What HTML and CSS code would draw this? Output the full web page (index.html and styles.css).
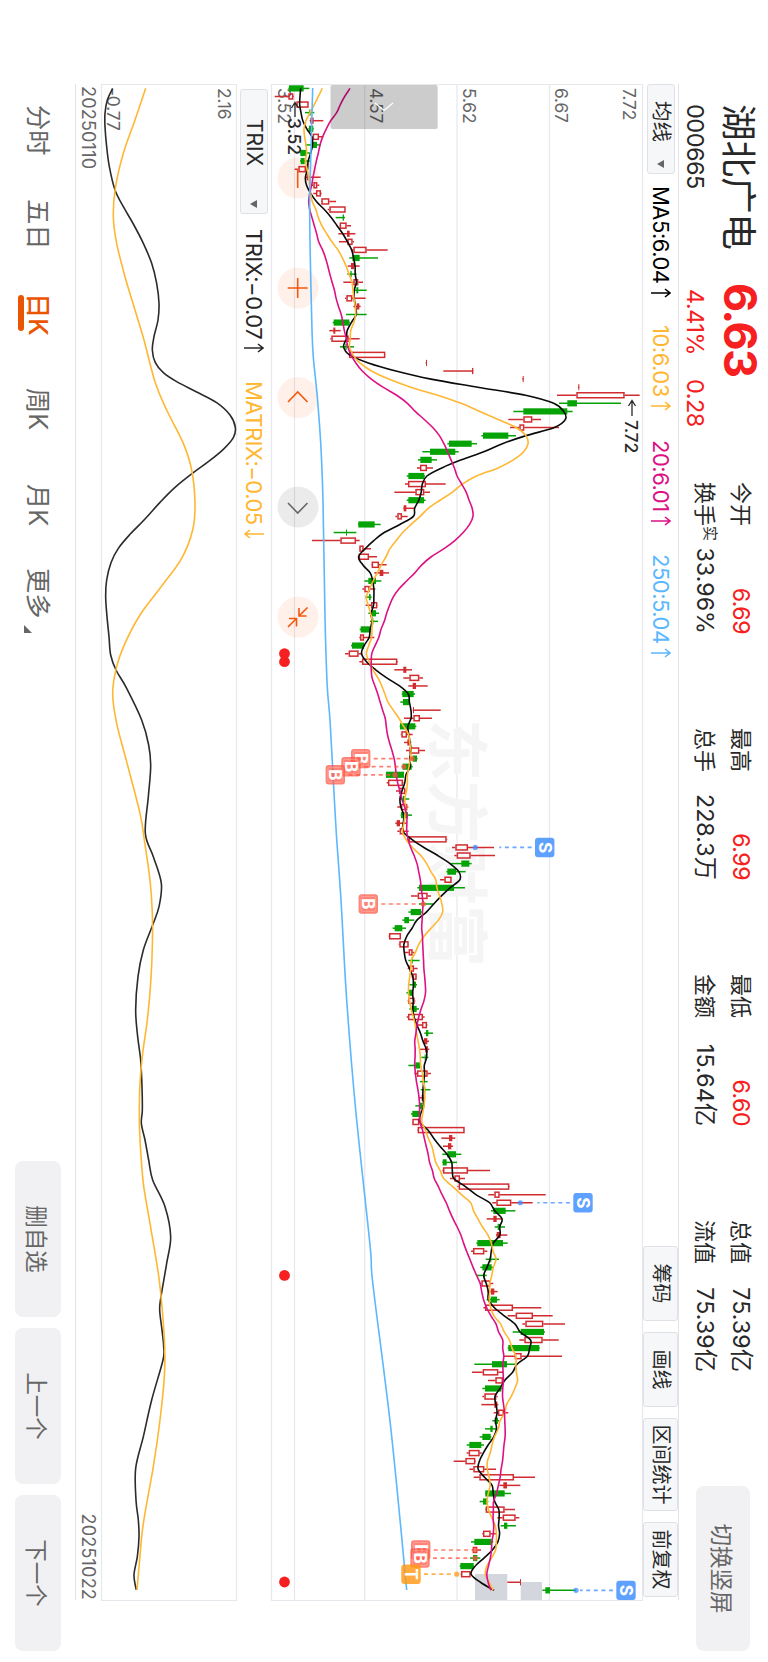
FILE: index.html
```html
<!DOCTYPE html>
<html lang="zh-CN">
<head>
<meta charset="utf-8">
<title>湖北广电 000665</title>
<link rel="stylesheet" href="styles.css">
</head>
<body>
<div class="screen">
<div class="stage">
  <header class="header">
    <div class="quote">
      <div class="quote-top"><span class="name">湖北广电</span><span class="price">6.63</span></div>
      <div class="quote-sub"><span class="code">000665</span><span class="pct">4.41%</span><span class="chg">0.28</span></div>
    </div>
    <div class="stats">
      <div class="stat"><span>今开</span><b class="red">6.69</b><span>换手<sup>实</sup></span><b>33.96%</b></div>
      <div class="stat"><span>最高</span><b class="red">6.99</b><span>总手</span><b>228.3万</b></div>
      <div class="stat"><span>最低</span><b class="red">6.60</b><span>金额</span><b>15.64亿</b></div>
      <div class="stat"><span>总值</span><b>75.39亿</b><span>流值</span><b>75.39亿</b></div>
    </div>
    <button class="btn btn-switch">切换竖屏</button>
  </header>

  <div class="bar bar-ma">
    <div class="select select-ma"><span>均线</span><i class="caret"></i></div>
    <span class="ind ind-ma5">MA5:6.04<svg class="arrow" viewBox="0 0 12 20"><path d="M6 20V1M2 6L6 1L10 6"/></svg></span>
    <span class="ind ind-ma10">10:6.03<svg class="arrow" viewBox="0 0 12 20"><path d="M6 20V1M2 6L6 1L10 6"/></svg></span>
    <span class="ind ind-ma20">20:6.01<svg class="arrow" viewBox="0 0 12 20"><path d="M6 20V1M2 6L6 1L10 6"/></svg></span>
    <span class="ind ind-ma250">250:5.04<svg class="arrow" viewBox="0 0 12 20"><path d="M6 20V1M2 6L6 1L10 6"/></svg></span>
    <div class="tools"><span class="tool">筹码</span><span class="tool">画线</span><span class="tool tool-wide">区间统计</span><span class="tool">前复权</span></div>
  </div>

  <svg class="chart chart-main" id="main" viewBox="84 125 1518 372"></svg>

  <div class="bar bar-trix">
    <div class="select select-trix"><span>TRIX</span><i class="caret"></i></div>
    <span class="ind ind-trix">TRIX:−0.07<svg class="arrow" viewBox="0 0 12 20"><path d="M6 20V1M2 6L6 1L10 6"/></svg></span>
    <span class="ind ind-matrix">MATRIX:−0.05<svg class="arrow" viewBox="0 0 12 20"><path d="M6 0V19M2 14L6 19L10 14"/></svg></span>
  </div>

  <svg class="chart chart-trix" id="trix" viewBox="84 531 1518 136"></svg>

  <div class="dates"><span>20250110</span><span>20251022</span></div>

  <footer class="footer">
    <nav class="tabs">
      <span class="tab t1">分时</span><span class="tab t2">五日</span><span class="tab t3 active">日K</span><span class="tab t4">周K</span><span class="tab t5">月K</span><span class="tab t6">更多<i class="corner"></i></span>
    </nav>
    <div class="actions"><button class="btn">删自选</button><button class="btn">上一个</button><button class="btn">下一个</button></div>
  </footer>
</div>
</div>
<script src="chart.js"></script>
</body>
</html>
```
FILE: styles.css
```css
* { box-sizing: border-box; }
body { margin: 0; background: #fff; }
.screen { width: 768px; height: 1662px; overflow: hidden; }
.stage {
  width: 1662px; height: 768px; display: flex; flex-direction: column;
  transform-origin: 0 0; transform: translateX(768px) rotate(90deg);
  font-family: Inter, "Noto Sans CJK SC", sans-serif; color: #282828; white-space: nowrap;
}
.header { height: 89px; flex: none; display: flex; padding-left: 104px; position: relative; }
.header::after, .dates::after {
  content: ""; position: absolute; left: 84px; width: 1516px; bottom: -1px; height: 1px; background: #e4e4e8;
}
.quote { width: 378px; flex: none; }
.quote-top { height: 59px; display: flex; align-items: center; padding-bottom: 5px; }
.name { width: 179px; font-size: 36.5px; font-weight: 400; }
.price { font-size: 45px; font-weight: 700; color: #f62020; letter-spacing: -1.6px; }
.quote-sub { display: flex; font-size: 23.5px; line-height: 27px; letter-spacing: -0.5px; }
.code { width: 185px; }
.pct { width: 90px; color: #f62020; }
.chg { color: #f62020; }
.stats { display: flex; flex: none; width: 890px; gap: 94px; padding-top: 9px; }
.stat {
  display: grid; grid-template-columns: auto auto; justify-content: space-between;
  grid-auto-rows: 36px; line-height: 36px; width: 152px; font-size: 22px;
}
.stat b { font-weight: 400; text-align: right; letter-spacing: 0; font-size: 23.3px; }
.stat sup { font-size: 15px; line-height: 0; vertical-align: 8px; }
.stat .red { color: #f62020; letter-spacing: -0.6px; }
.btn {
  flex: none; border: 0; border-radius: 8px; background: #f1f1f3; color: #666; padding: 0;
  font: 22.5px Inter, "Noto Sans CJK SC", sans-serif; width: 156px; height: 46px;
}
.btn-switch { width: 165px; height: 54px; margin: 18px 0 0 114px; }

.bar { flex: none; display: flex; align-items: center; position: relative; }
.bar-ma { height: 36px; padding-left: 84px; }
.bar-trix { height: 34px; padding-left: 89px; }
.select {
  display: flex; align-items: center; justify-content: space-between; height: 28px;
  background: #f6f7f9; border: 1px solid #dfe1e6; border-radius: 3px; font-size: 20.5px; line-height: 26px;
}
.select-ma { width: 90px; padding: 0 5px 0 16px; }
.select-trix { width: 125px; padding: 0 5px 0 29px; font-size: 21px; }
.caret { border: 4.5px solid transparent; border-top: 7px solid #666; border-bottom: 0; }
.ind { display: flex; align-items: center; font-size: 22px; letter-spacing: -0.5px; }
.arrow { width: 12px; height: 20px; margin-left: 3px; fill: none; stroke: currentColor; stroke-width: 1.6; }
.ind-ma5 { width: 139px; margin-left: 12px; color: #000; }
.ind-ma10 { width: 115px; color: #ffb733; }
.ind-ma20 { width: 114px; color: #dc1186; }
.ind-ma250 { color: #5bb8ff; }
.ind-trix { width: 152px; margin-left: 15px; }
.ind-matrix { color: #ffb733; }
.tools { display: flex; gap: 11px; margin-left: auto; margin-right: 65px; }
.tool {
  width: 75px; height: 35px; text-align: center; font-size: 20px; line-height: 33px;
  background: #f6f7f9; border: 1px solid #dfe1e6; border-radius: 3px;
}
.tool-wide { width: 93px; }

.chart { flex: none; display: block; width: 1518px; margin-left: 84px; overflow: visible; }
.chart-main { height: 372px; }
.chart-trix { height: 136px; }
.grid { stroke: #e6e8ee; stroke-width: 1.2; fill: none; }
.axis { font-size: 17.5px; fill: #666; letter-spacing: -0.2px; }
.peak { font-size: 17.5px; fill: #282828; letter-spacing: -0.1px; font-weight: 500; }
.mark-arrow { fill: none; stroke: #282828; stroke-width: 1.3; }
.mark { font-size: 62px; font-weight: 700; fill: #f5f5f6; }
.up { stroke: #d12d30; fill: none; stroke-width: 1.5; }
.up-fill { fill: #d12d30; }
.down { stroke: #06a306; fill: none; stroke-width: 1.5; }
.down-fill { fill: #06a306; }
.line { fill: none; stroke-width: 1.6; stroke-linejoin: round; }
.black { stroke: #0a0a0a; }
.dark { stroke: #2b2b2b; }
.amber { stroke: #ffb733; }
.pink { stroke: #dc1186; }
.sky { stroke: #5bb8ff; }
.glyph { fill: none; stroke: #f4580d; stroke-width: 1.6; }
.glyph-off { stroke: #666; }
.badge text { font-size: 17px; font-weight: 700; fill: #fff; text-anchor: middle; }

.dates {
  flex: none; height: 25px; padding: 0 62px 0 86px; display: flex; justify-content: space-between;
  align-items: center; font-size: 18px; color: #666; letter-spacing: 0.2px; position: relative;
}
.footer { flex: none; height: 76px; display: flex; justify-content: space-between; padding: 15px 11px 0 105px; }
.tabs { display: flex; font-size: 25.3px; line-height: 46px; color: #666; }
.tab { position: relative; }
.t1, .t2 { width: 94px; }
.t3 { width: 95px; }
.t4 { width: 96px; }
.t5 { width: 84px; }
.active { color: #ea5504; font-weight: 500; }
.active::after {
  content: ""; position: absolute; left: 2px; top: 37px; width: 36px; height: 6px; border-radius: 3px; background: #ea5504;
}
.corner { position: absolute; left: 57px; top: 29px; border-left: 8px solid transparent; border-bottom: 8px solid #666; }
.actions { display: flex; gap: 11px; }
```
FILE: chart.js
```js
const NS = 'http://www.w3.org/2000/svg';
const BASE = 768;
const STEP = 8.075;
const FIRST = 88.4;
const main = document.getElementById('main');
const trix = document.getElementById('trix');

function add(parent, tag, attrs, text) {
  const el = document.createElementNS(NS, tag);
  for (const k in attrs) el.setAttribute(k, attrs[k]);
  if (text) el.textContent = text;
  parent.appendChild(el);
  return el;
}
const slot = i => FIRST + i * STEP;
const level = v => BASE - v;

// Each block: height offset, then "low bodyLow bodyHigh high" in thirds of a pixel.
// A leading minus marks a falling day.
const blocks = [
  [0, `-865 867 911 928;824 865 880 882;888 889 926 926;-915 928 932 943;929 931 941 970;-925 927 940 941;935 938 957 970;-915 935 951 963;-900 901 921 933;-900 902 914 931;884 895 918 920;918 920 925 962;935 940 952 958;940 948 963 965;963 964 988 1008;983 988 1037 1037;-1007 1028 1032 1035;1018 1019 1040 1053;1015 1041 1049 1066;1017 1042 1058 1062;1055 1060 1100 1163;-1048 1057 1079 1134;1043 1053 1062 1079;-1042 1051 1055 1070;1030 1060 1075 1089;-1063 1069 1075 1100;1035 1039 1057 1097;1060 1070 1078 1082;-1038 1065 1068 1100;-998 1001 1048 1050;988 1000 1006 1022;991 994 1046 1079;-1020 1036 1040 1062`],
  [230, `356 357 466 466;587 588 591 591;640 726 730 730;877 878 881 881;1044 1045 1048 1048;981 1039 1184 1229;-987 1012 1041 1173;-850 880 1012 1028;835 880 907 933;840 868 883 987;-754 759 835 858;-652 657 725 741;-577 600 676 686;-564 571 605 621;561 570 591 609;-530 535 583 585;525 534 588 647;493 556 583 600;-530 535 582 587;520 521 529 553;496 502 516 533;-384 385 434 452;-311 348 351 379;246 331 378 389;387 388 401 423;385 386 417 441;424 425 447 470;433 449 460 477;-403 415 438 454;397 403 419 436;-406 417 422 425;407 423 442 443;-415 424 438 447;-420 427 430 444;-389 392 422 425;388 390 402 433;-363 366 402 405;345 356 386 397;388 396 502 504;493 520 529 546;520 538 568 579;535 548 558 593;-515 517 551 555;-511 519 537 540;548 549 552 632;522 550 570 606`],
  [270, `-389 390 436 439;392 394 411 428;402 412 418 424;408 418 448 465;-417 428 441 443;-395 398 425 428;-347 348 402 402;350 354 399 400;378 387 406 408;-390 398 404 418;382 393 412 415;-392 393 414 426;376 380 390 408;382 389 401 416;412 416 530 532;546 556 594 672;553 560 602 675;-541 574 598 605;-529 532 558 587;510 523 545 545;-442 447 552 585;423 443 473 483;-447 459 462 490;-415 422 453 458;-397 403 417 433;-368 374 397 408;356 357 393 393;386 388 416 417;405 416 428 433;-415 425 428 449;413 418 432 443;425 428 440 441;-418 428 438 441;-409 415 428 430;413 415 434 436;-418 425 440 447;410 414 459 464;440 456 471 472;-463 468 475 489;459 462 472 477;450 466 474 478;-454 464 467 475;-415 436 450 452;433 441 473 483;-450 459 462 473;-452 463 466 481;446 455 461 466;-436 449 458 460`],
  [370, `-123 127 148 150;126 127 148 150;142 143 284 284;214 237 247 256;219 234 244 249;-217 232 258 274;-217 218 230 261;217 219 294 360;240 253 270 285;262 266 418 419;355 373 389 527;367 379 424 488;-363 370 407 436;350 370 380 395;-374 383 391 405;378 380 392 412;-319 322 399 413;303 309 343 352;-347 361 364 387;-331 337 365 372;-320 342 345 350;330 334 361 370;352 363 373 383;-350 362 381 389;340 345 429 514;413 437 489 548;457 466 520 585;-428 452 522 525;448 463 518 566;-413 415 508 509;402 434 455 576;-313 366 411 435;306 338 385 400;354 376 399 400;-337 345 394 396;337 343 379 383;334 373 382 385;371 384 402 415;-367 374 384 388;-345 361 368 380;-329 337 362 364;-290 298 334 342;290 296 329 335;251 286 316 318;298 310 343 378;311 328 432 495;388 400 411 451;-345 346 404 423;-329 339 351 355;345 347 404 435;382 398 437 448;-392 402 412 438;337 339 362 378;-303 313 365 370;305 308 322 333;-300 309 322 331;-269 271 311 312;272 273 302 305;412 450 453 453;-517 526 540 618`]
];
const candles = [];
blocks.forEach(([off, rows]) => rows.split(';').forEach(r => {
  const n = r.split(' ').map(Number);
  const down = n[0] < 0;
  const [lo, a, b, hi] = n.map(v => off + Math.abs(v) / 3);
  candles.push({ down, lo, a, b, hi, close: down ? a : b });
}));

// Frame and price levels
[218.5, 311, 403.3, 473.5].forEach(y => add(main, 'path', { class: 'grid', d: `M84 ${y}H1600` }));
add(main, 'path', { class: 'grid', d: 'M84.5 125.5H1600.5V496.5H84.5Z' });
[['东', 719], ['方', 781], ['财', 843], ['富', 905]].forEach(([c, x]) => add(main, 'text', { class: 'mark', x, y: 334 }, c));
[['7.72', 145], ['6.67', 213], ['5.62', 305], ['4.57', 398], ['3.52', 490]].forEach(([t, y]) => add(main, 'text', { class: 'axis', x: 88, y }, t));

// Chart controls
[178, 288, 397.5, 507, 617].forEach((x, i) => add(main, 'circle', { cx: x, cy: 470, r: 20.5, fill: i === 3 ? 'rgba(0,0,0,.08)' : 'rgba(250,90,10,.09)' }));

// Suspended-range blocks
add(main, 'rect', { x: 1574, y: 260.7, width: 26, height: 32.3, fill: '#d3d6dc' });
add(main, 'rect', { x: 1582, y: 226, width: 18, height: 21.3, fill: '#d3d6dc' });

candles.forEach((c, i) => {
  const x = slot(i), cls = c.down ? 'down' : 'up';
  const h = c.b - c.a;
  if (c.down || h < 4) {
    add(main, 'path', { class: cls, d: `M${x} ${level(c.hi)}V${level(c.lo)}` });
    add(main, 'rect', { class: cls + '-fill', x: x - 3.1, y: level(c.b), width: 6.2, height: h });
  } else {
    add(main, 'path', { class: cls, d: `M${x} ${level(c.hi)}V${level(c.b)}M${x} ${level(c.a)}V${level(c.lo)}` });
    add(main, 'rect', { class: cls, x: x - 2.5, y: level(c.b) + .7, width: 5, height: h - 1.4 });
  }
});

function smooth(pts) {
  let d = `M${pts[0]}`;
  for (let i = 0; i < pts.length - 1; i++) {
    const p0 = pts[i - 1] || pts[i], p1 = pts[i], p2 = pts[i + 1], p3 = pts[i + 2] || p2;
    d += `C${p1[0] + (p2[0] - p0[0]) / 6} ${p1[1] + (p2[1] - p0[1]) / 6} ${p2[0] - (p3[0] - p1[0]) / 6} ${p2[1] - (p3[1] - p1[1]) / 6} ${p2}`;
  }
  return d;
}
function average(period, seed, cls) {
  const pts = candles.map((c, i) => {
    let v;
    if (i < seed.length) v = seed[i] / 3;
    else v = candles.slice(i - period + 1, i + 1).reduce((s, k) => s + k.close, 0) / period;
    return [slot(i), level(v)];
  });
  add(main, 'path', { class: 'line ' + cls, d: smooth(pts) });
}
average(5, [902, 900, 899, 903], 'black');
average(10, [967, 955, 943, 930, 918, 912, 914, 918, 920], 'amber');
average(20, [1050, 1034, 1021, 1010, 992, 979, 968, 960, 955, 949, 944, 939, 935, 929, 926, 929, 936, 943, 950], 'pink');

const curve = list => smooth(list.map(([v, x]) => [x, level(v)]));
add(main, 'path', { class: 'line sky', d: curve([[312.7, 88], [311.3, 140], [309.7, 200], [310.3, 257], [312, 330], [313.3, 357], [317.3, 397], [320.7, 443], [322.7, 490], [323.5, 530], [324.2, 570], [325.3, 630], [327.3, 687], [330, 720], [333.3, 780], [336.3, 833], [341, 900], [346.7, 1000], [355.7, 1110], [370, 1245], [373, 1285], [391, 1430], [406.7, 1590]]) });

// Scroll handle
add(main, 'rect', { x: 85, y: 330.3, width: 44, height: 107.2, rx: 2, fill: 'rgba(0,0,0,.2)' });
add(main, 'path', { d: 'M103 375L110.5 384L103 393', fill: 'none', stroke: '#fff', 'stroke-width': 1.3 });

// High and low annotations
add(main, 'text', { class: 'peak', x: 420, y: 143 }, '7.72');
add(main, 'path', { class: 'mark-arrow', d: 'M416 136H401M406 132.5L400.5 136L406 139.5' });
add(main, 'text', { class: 'peak', x: 118, y: 480 }, '3.52');
add(main, 'path', { class: 'mark-arrow', d: 'M117 473H103M108 469.5L102.5 473L108 476.5' });

[
  'M169 470.3H188', 'M278 470.3H298M288 460.3V480.3', 'M402 460.5L392 470.3L402 480',
  'M503 460.5L513 470.3L503 480', 'M607.5 460.5L616 469M608 469H616V461.5M627 480L618.5 471.5M618.5 479V471.5H626.5'
].forEach((d, i) => add(main, 'path', { class: 'glyph' + (i === 3 ? ' glyph-off' : ''), d }));

[653.6, 661.7, 1275.4, 1582].forEach(x => add(main, 'circle', { cx: x, cy: 483.5, r: 5.4, fill: '#f62020' }));

// Trade markers: letter, slot, badge level, dot level
const tones = { B: '#ff5543', S: '#3c8cff', T: '#ff9914' };
[['B', 83, 360.7, 412.3], ['B', 84, 351, 404], ['B', 85, 335.3, 395], ['B', 101, 368.3, 423.3], ['B', 181, 420.7, 475], ['B', 182, 420, 475], ['T', 184, 411, 456.7], ['S', 94, 544.7, 475.3], ['S', 138, 583, 520.3], ['S', 186, 626, 576]].forEach(([t, i, at, dot]) => {
  const x = slot(i), y = level(at), yd = level(dot), s = y < yd ? 1 : -1;
  const g = add(main, 'g', { class: 'badge' });
  const end = t === 'S' && i !== 186 ? level(dot + 24 - (i === 138 ? 7 : 0)) : yd - s * 4;
  add(g, 'path', { d: `M${x} ${y + s * 13}V${end}`, stroke: tones[t], 'stroke-width': 1.7, 'stroke-dasharray': '4 3.6', opacity: .75 });
  add(g, 'circle', { cx: x, cy: yd, r: 2.6, fill: tones[t], opacity: .75 });
  add(g, 'rect', { x: x - 9.7, y: y - 9.7, width: 19.4, height: 19.4, rx: 3, fill: tones[t], opacity: t === 'B' ? .72 : .82 });
  if (t === 'B') add(g, 'rect', { x: x - 7.4, y: y - 7.4, width: 14.8, height: 14.8, rx: 1.5, fill: 'none', stroke: '#fff', 'stroke-width': .8, opacity: .3 });
  add(g, 'text', { x, y: y + 6.1 }, t);
});

// TRIX panel
add(trix, 'path', { class: 'grid', d: 'M84.5 531.5H1600.5V666.5H84.5Z' });
add(trix, 'text', { class: 'axis', x: 88, y: 550 }, '2.16');
add(trix, 'text', { class: 'axis', x: 88, y: 661 }, '-0.77');
const parts = (...groups) => groups.flatMap(([ox, oy, pts]) => pts.map(([a, b]) => [ox + a / 3, oy + b / 3]));
add(trix, 'path', { class: 'line dark', d: curve(parts(
  [0, 70, [[338, 55], [322, 90], [315, 130], [315, 170], [320, 230], [328, 290], [345, 360], [370, 410], [400, 462], [430, 520], [455, 580], [470, 640], [477, 700], [474, 750], [462, 800]]],
  [0, 340, [[457, 30], [466, 68], [490, 98], [530, 125], [590, 156], [650, 188], [690, 225], [706, 262], [700, 293], [670, 328], [625, 365], [577, 400], [525, 442], [480, 487], [435, 537], [390, 583], [355, 625], [333, 668], [320, 720], [317, 770], [321, 830], [327, 890], [332, 945]]],
  [90, 670, [[78, 0], [110, 55], [155, 150], [176, 225], [182, 290], [175, 380], [166, 490], [190, 560], [214, 640], [207, 710], [188, 765], [160, 840], [144, 920], [137, 1020], [143, 1100], [152, 1170], [156, 1250], [157, 1320], [154, 1360], [165, 1410]]],
  [0, 1140, [[446, 60], [458, 120], [495, 200], [512, 290], [500, 370], [483, 470], [479, 510], [486, 570], [491, 620], [489, 660], [455, 780], [430, 890], [407, 985], [408, 1080], [415, 1140], [417, 1190], [412, 1250], [402, 1305], [409, 1350]]]
)) });
add(trix, 'path', { class: 'line amber', d: curve(parts(
  [0, 70, [[437, 55], [405, 150], [370, 250], [346, 355], [340, 440], [350, 520], [375, 620], [405, 720]]],
  [0, 340, [[432, 0], [465, 125], [500, 210], [550, 310], [575, 390], [585, 490], [578, 570], [545, 655], [480, 745], [420, 825], [375, 910], [350, 980]]],
  [90, 670, [[68, 70], [80, 160], [110, 275], [150, 430], [163, 510], [180, 630], [187, 730], [187, 830], [182, 940], [172, 1050], [158, 1150], [150, 1240], [148, 1330]]],
  [0, 1140, [[420, 0], [430, 130], [450, 250], [475, 400], [486, 500], [494, 620], [493, 710], [480, 840], [460, 980], [430, 1150], [418, 1270], [411, 1350]]]
)) });
```
